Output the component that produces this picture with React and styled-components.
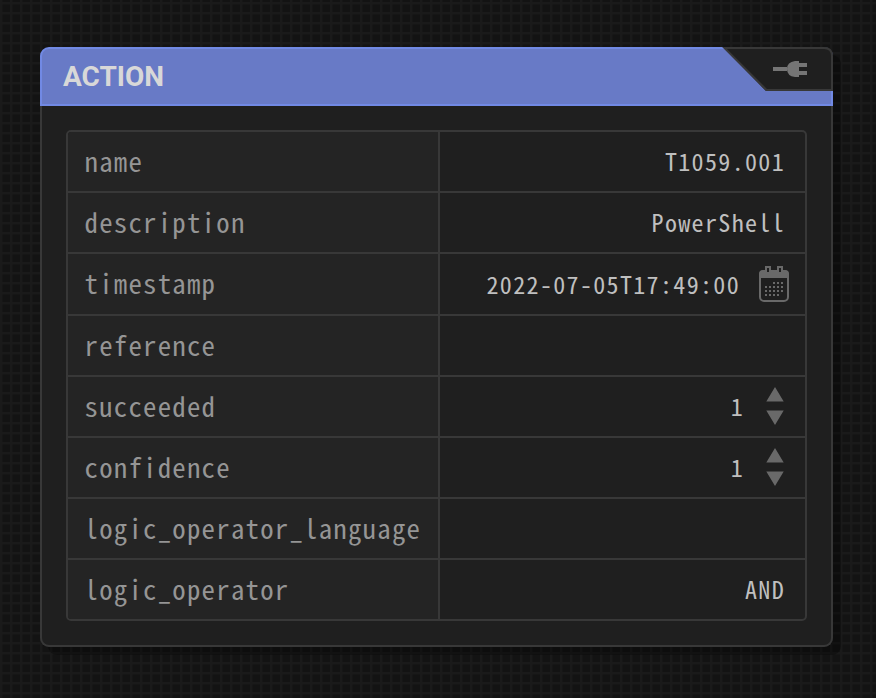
import React from 'react';
import styled, { createGlobalStyle } from 'styled-components';

const mono = "'Noto Sans Mono CJK SC', 'Liberation Mono', monospace";

const Global = createGlobalStyle`
  * { box-sizing: border-box; }
  html, body { margin: 0; background: #151515; }
`;

const Canvas = styled.main`
  height: 698px;
  padding: 47px 43px 0 40px;
  overflow: hidden;
  background-color: #131313;
  background-image:
    linear-gradient(90deg, #1a1a1a 2px, transparent 3px),
    linear-gradient(#1a1a1a 2px, transparent 3px);
  background-size: 10px 10px;
  background-position: 0 0, 0 2px;
`;

const Card = styled.section`
  height: 600px;
  border-radius: 9px;
  background: #1f1f1f;
  box-shadow: 8px 8px 0 rgba(0, 0, 0, 0.3);
`;

const Header = styled.header`
  display: flex;
  justify-content: space-between;
  height: 59px;
  border: 2px solid #7189e4;
  border-radius: 9px 9px 0 0;
  background: #687ac6;
`;

const Title = styled.h1`
  margin: 0;
  padding-left: 21px;
  font: 700 28px/56px Roboto, sans-serif;
  color: #d8d8d8;
`;

const PlugTab = styled.svg`
  flex: none;
  width: 111px;
  height: 44px;
  margin: -2px -2px 0 0;
`;

const Body = styled.div`
  height: 541px;
  padding: 24px 24px;
  border: 2px solid #383838;
  border-top: 0;
  border-radius: 0 0 9px 9px;
`;

const Fields = styled.div`
  border: 2px solid #383838;
  border-radius: 5px;
  overflow: hidden;
`;

const Row = styled.div`
  display: grid;
  grid-template-columns: 372px 1fr;
  height: ${(p) => p.$height}px;
  border-bottom: 2px solid #383838;
  &:last-child { border-bottom: 0; }
`;

const Label = styled.div`
  padding-left: 16.5px;
  border-right: 2px solid #383838;
  background: #242424;
  color: #959595;
  font: 300 26.8px/58px ${mono};
  letter-spacing: 1.24px;
  white-space: nowrap;
`;

const Value = styled.div`
  display: flex;
  align-items: center;
  justify-content: flex-end;
  padding-right: ${(p) => (p.$control ? 16 : 20)}px;
  color: #bfbfbf;
`;

const ValueText = styled.span`
  height: 59px;
  font: 300 24px/57px ${mono};
  letter-spacing: 1.34px;
  font-feature-settings: 'zero';
  white-space: nowrap;
`;

const CalendarIcon = styled.svg`
  flex: none;
  width: 30px;
  height: 36px;
  margin-left: 19px;
`;

const Stepper = styled.svg`
  flex: none;
  width: 18px;
  height: 38px;
  margin: 0 5px 2px 22px;
`;

const dots = [
  [14, 16], [18, 16], [22, 16],
  [6, 20], [10, 20], [14, 20], [18, 20], [22, 20],
  [6, 24], [10, 24], [14, 24], [18, 24], [22, 24],
  [6, 28], [10, 28], [14, 28], [18, 28],
];

function Calendar() {
  return (
    <CalendarIcon viewBox="0 0 30 36">
      <rect x="1" y="5" width="28" height="30" rx="4" fill="none" stroke="#696969" strokeWidth="2" />
      <path d="M0 12V8q0-4 4-4h22q4 0 4 4v4z" fill="#696969" />
      <path d="M6 0h6v6H6zM18 0h6v6h-6z" fill="#696969" />
      <path d="M8 2h2v4H8zM20 2h2v4h-2z" fill="#1f1f1f" />
      {dots.map(([x, y]) => <rect key={`${x}-${y}`} x={x} y={y} width="2" height="2" fill="#696969" />)}
    </CalendarIcon>
  );
}

function Arrows() {
  return (
    <Stepper viewBox="0 0 18 38">
      <path d="M9 0l8.7 14.5H.3zM9 38L.3 23.5h17.4z" fill="#696969" />
    </Stepper>
  );
}

const fields = [
  { name: 'name', value: 'T1059.001', height: 61 },
  { name: 'description', value: 'PowerShell', height: 61 },
  { name: 'timestamp', value: '2022-07-05T17:49:00', height: 62, control: Calendar },
  { name: 'reference', value: '', height: 61 },
  { name: 'succeeded', value: '1', height: 61, control: Arrows },
  { name: 'confidence', value: '1', height: 61, control: Arrows },
  { name: 'logic_operator_language', value: '', height: 61 },
  { name: 'logic_operator', value: 'AND', height: 59 },
];

export default function App() {
  return (
    <>
      <Global />
      <Canvas>
        <Card>
          <Header>
            <Title>ACTION</Title>
            <PlugTab viewBox="0 0 111 44">
              <path d="M1 0H102q9 0 9 9V44H44z" fill="#1f1f1f" />
              <path d="M2.5 1H102q8 0 8 8V43H44.5z" fill="none" stroke="#383838" strokeWidth="2" />
              <path d="M51 20h14v4H51zM77 16h8v4h-8zM77 24h8v4h-8zM77 14v16h-4q-8-1-8-8t8-8z" fill="#757575" />
            </PlugTab>
          </Header>
          <Body>
            <Fields>
              {fields.map(({ name, value, height, control: Control }) => (
                <Row key={name} $height={height}>
                  <Label>{name}</Label>
                  <Value $control={Boolean(Control)}>
                    <ValueText>{value}</ValueText>
                    {Control && <Control />}
                  </Value>
                </Row>
              ))}
            </Fields>
          </Body>
        </Card>
      </Canvas>
    </>
  );
}
